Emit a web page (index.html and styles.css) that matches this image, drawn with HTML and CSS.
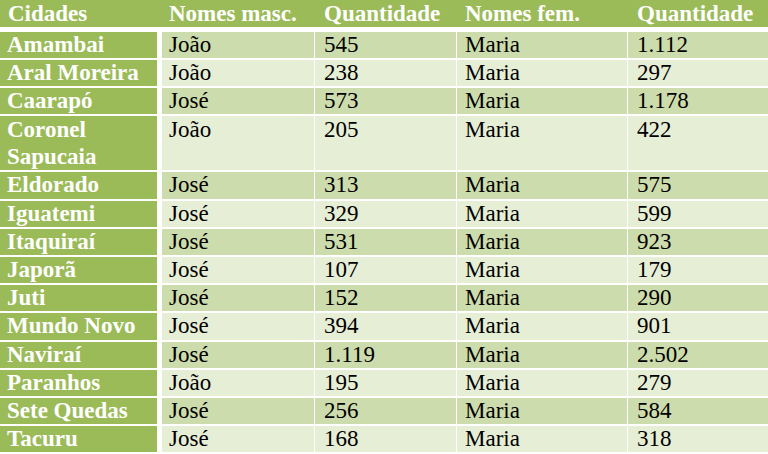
FILE: index.html
```html
<!DOCTYPE html>
<html lang="pt">
<head>
<meta charset="utf-8">
<link rel="stylesheet" href="styles.css">
</head>
<body>
<div class="table">
  <div class="row head">
    <div class="c1">Cidades</div><div class="c2">Nomes masc.</div><div class="c3">Quantidade</div><div class="c4">Nomes fem.</div><div class="c5">Quantidade</div>
  </div>
  <div class="row dark"><div class="c1">Amambai</div><div class="c2">João</div><div class="c3">545</div><div class="c4">Maria</div><div class="c5">1.112</div></div>
  <div class="row light"><div class="c1">Aral Moreira</div><div class="c2">João</div><div class="c3">238</div><div class="c4">Maria</div><div class="c5">297</div></div>
  <div class="row dark"><div class="c1">Caarapó</div><div class="c2">José</div><div class="c3">573</div><div class="c4">Maria</div><div class="c5">1.178</div></div>
  <div class="row light tall"><div class="c1">Coronel<br>Sapucaia</div><div class="c2">João</div><div class="c3">205</div><div class="c4">Maria</div><div class="c5">422</div></div>
  <div class="row dark"><div class="c1">Eldorado</div><div class="c2">José</div><div class="c3">313</div><div class="c4">Maria</div><div class="c5">575</div></div>
  <div class="row light"><div class="c1">Iguatemi</div><div class="c2">José</div><div class="c3">329</div><div class="c4">Maria</div><div class="c5">599</div></div>
  <div class="row dark"><div class="c1">Itaquiraí</div><div class="c2">José</div><div class="c3">531</div><div class="c4">Maria</div><div class="c5">923</div></div>
  <div class="row light"><div class="c1">Japorã</div><div class="c2">José</div><div class="c3">107</div><div class="c4">Maria</div><div class="c5">179</div></div>
  <div class="row dark"><div class="c1">Juti</div><div class="c2">José</div><div class="c3">152</div><div class="c4">Maria</div><div class="c5">290</div></div>
  <div class="row light"><div class="c1">Mundo Novo</div><div class="c2">José</div><div class="c3">394</div><div class="c4">Maria</div><div class="c5">901</div></div>
  <div class="row dark"><div class="c1">Naviraí</div><div class="c2">José</div><div class="c3">1.119</div><div class="c4">Maria</div><div class="c5">2.502</div></div>
  <div class="row light"><div class="c1">Paranhos</div><div class="c2">João</div><div class="c3">195</div><div class="c4">Maria</div><div class="c5">279</div></div>
  <div class="row dark"><div class="c1">Sete Quedas</div><div class="c2">José</div><div class="c3">256</div><div class="c4">Maria</div><div class="c5">584</div></div>
  <div class="row light"><div class="c1">Tacuru</div><div class="c2">José</div><div class="c3">168</div><div class="c4">Maria</div><div class="c5">318</div></div>
</div>
</body>
</html>
```

FILE: styles.css
```css
html, body {
  margin: 0;
  padding: 0;
  background: #ffffff;
}
body {
  width: 768px;
  height: 454px;
  overflow: hidden;
  font-family: "Liberation Serif", "Times New Roman", serif;
  font-size: 23px;
  color: #000;
}
.table {
  display: flex;
  flex-direction: column;
  gap: 2px;
  width: 768px;
}
.row {
  display: flex;
  gap: 1px;
  height: 26.2px;
  line-height: 26.2px;
  white-space: nowrap;
}
.row > div {
  box-sizing: border-box;
  overflow: visible;
}
.head {
  height: 27px;
  line-height: 27px;
  margin-bottom: 2.5px;
  background: #9bbb59;
  color: #fff;
  font-weight: bold;
}
.head > div {
  background: #9bbb59;
}
.head .c1 { width: 159px; padding-left: 8px; }
.head .c2 { width: 154px; padding-left: 9px; }
.row .c3 { width: 141px; padding-left: 9px; }
.row .c4 { width: 170px; padding-left: 8px; }
.row .c5 { flex: 1; padding-left: 9px; }
.row:not(.head) .c1 {
  width: 157px;
  margin-right: 4px;
  padding-left: 7px;
  background: #9bbb59;
  color: #fff;
  font-weight: bold;
}
.row:not(.head) .c2 { width: 152px; padding-left: 7px; }
.dark > div { background: #cddcac; }
.light > div { background: #e6eed6; }
.tall {
  height: 54.4px;
  line-height: 27px;
}
```
